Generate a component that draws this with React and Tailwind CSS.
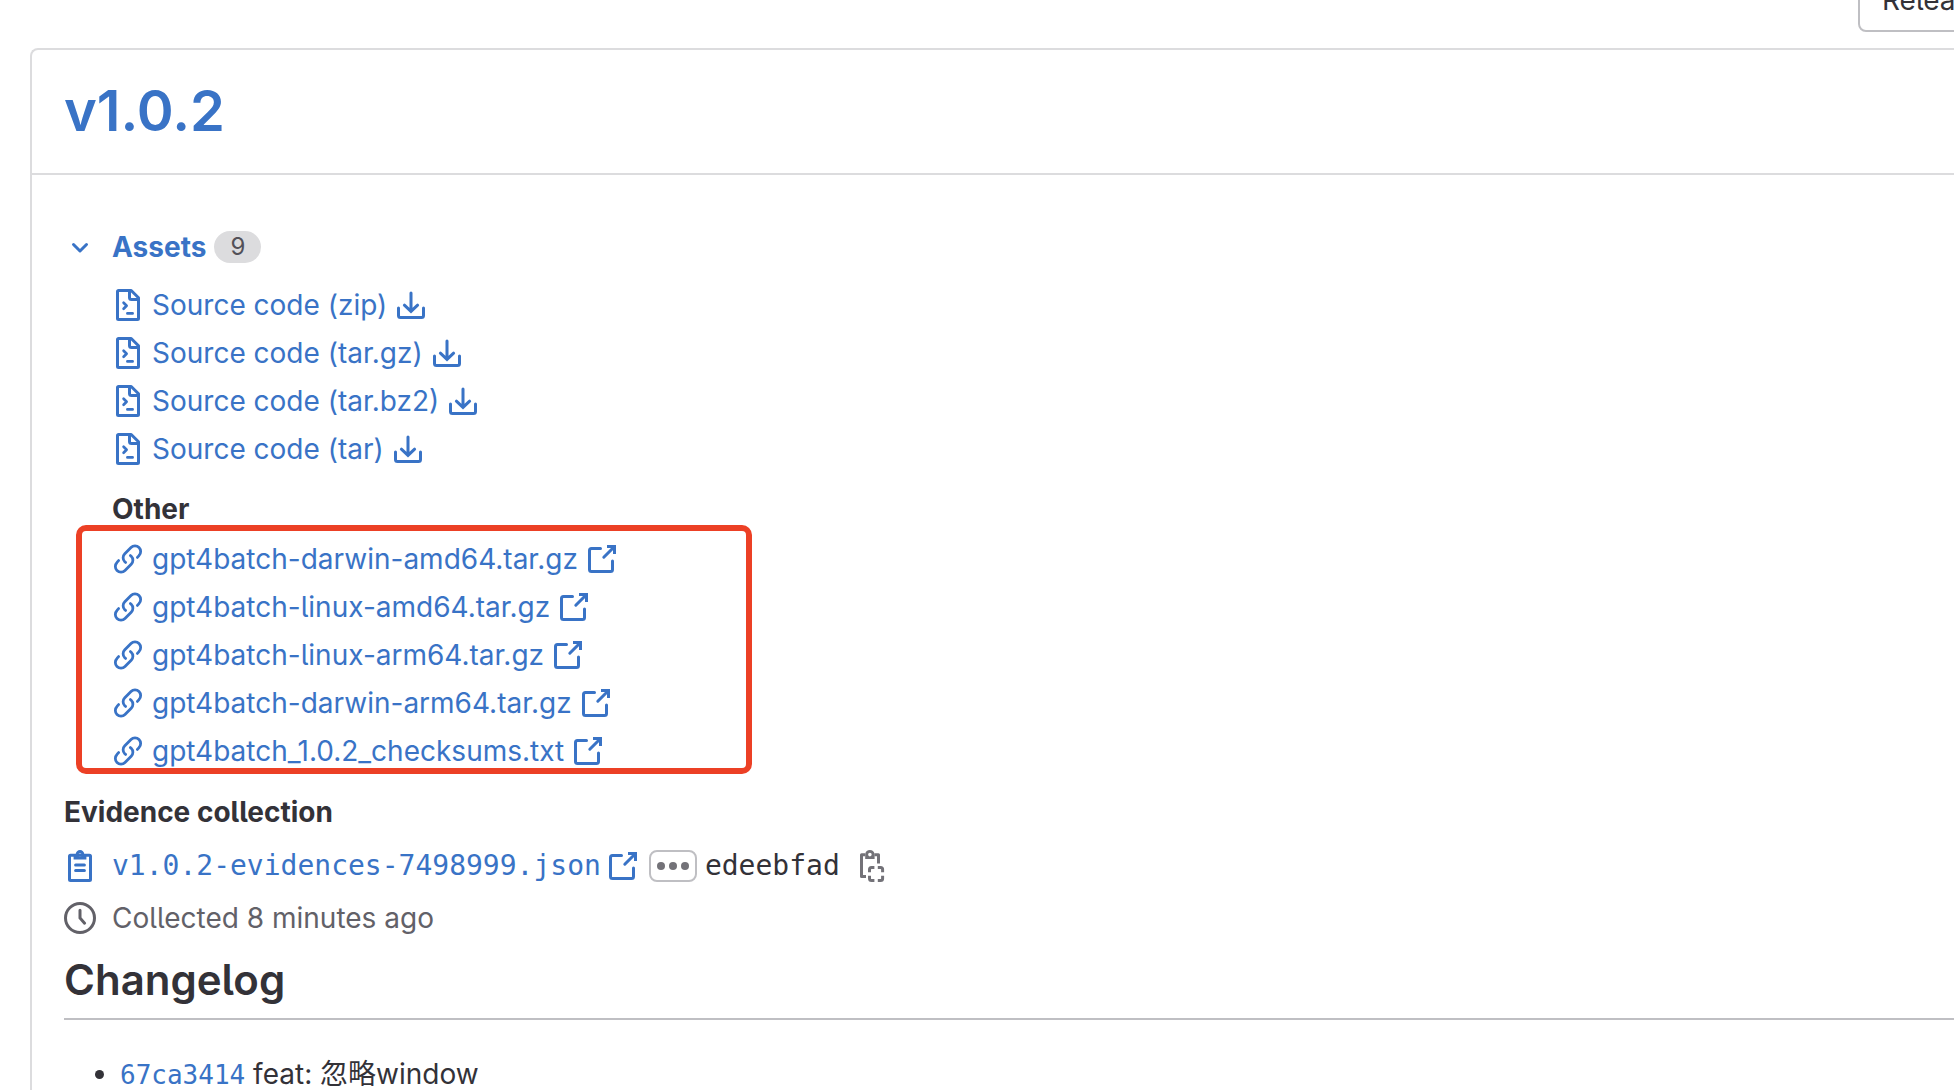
import { useState } from "react";

const sources = [
  "Source code (zip)",
  "Source code (tar.gz)",
  "Source code (tar.bz2)",
  "Source code (tar)",
];

const others = [
  "gpt4batch-darwin-amd64.tar.gz",
  "gpt4batch-linux-amd64.tar.gz",
  "gpt4batch-linux-arm64.tar.gz",
  "gpt4batch-darwin-arm64.tar.gz",
  "gpt4batch_1.0.2_checksums.txt",
];

function Icon({ children, className = "" }) {
  return (
    <svg
      viewBox="0 0 16 16"
      className={`size-8 shrink-0 ${className}`}
      fill="none"
      stroke="currentColor"
      strokeWidth="1.5"
      aria-hidden="true"
    >
      {children}
    </svg>
  );
}

function ChevronIcon({ className }) {
  return (
    <Icon className={className}>
      <path
        d="M4.75 6.75 8 10l3.25-3.25"
        strokeLinecap="round"
        strokeLinejoin="round"
      />
    </Icon>
  );
}

function DocCodeIcon() {
  return (
    <Icon>
      <path
        d="M9.6.75H3.25a.5.5 0 0 0-.5.5v13.5a.5.5 0 0 0 .5.5h9.5a.5.5 0 0 0 .5-.5V4.4L9.6.75Z"
        strokeLinejoin="round"
      />
      <path d="M8.75 1v3.25a1 1 0 0 0 1 1H13" />
      <path
        d="m5.8 6.9 1.5 1.5-1.5 1.5M7.7 12.2h2.6"
        strokeWidth="1.35"
        strokeLinecap="round"
        strokeLinejoin="round"
      />
    </Icon>
  );
}

function DownloadIcon() {
  return (
    <Icon>
      <path
        d="M8 2v9M4.7 8.1 8 11.2l3.3-3.1M1.75 9.5v3.75a1 1 0 0 0 1 1h10.5a1 1 0 0 0 1-1V9.5"
        strokeLinecap="round"
      />
    </Icon>
  );
}

function LinkIcon() {
  return (
    <Icon>
      <path
        d="m3.3 8.8-.8.9a2.8 2.8 0 0 0 4 4l3.1-3.1a2.8 2.8 0 0 0 0-4l-.4-.3M12.7 7.2l.8-.9a2.8 2.8 0 0 0-4-4L6.4 5.4a2.8 2.8 0 0 0 0 4l.4.3"
        strokeWidth="1.4"
        strokeLinecap="round"
      />
    </Icon>
  );
}

function ExternalIcon() {
  return (
    <Icon>
      <path
        d="M7.25 2.75h-4.5a1 1 0 0 0-1 1v9.5a1 1 0 0 0 1 1h9.5a1 1 0 0 0 1-1V9"
        strokeLinecap="round"
      />
      <path d="m8.9 7.1 5-5" strokeLinecap="round" />
      <path d="M10.5 1.75h3.75v3.75" />
    </Icon>
  );
}

function ClipboardIcon() {
  return (
    <Icon>
      <path
        d="M3.25 2.6h9.5a.5.5 0 0 1 .5.5v11.65a.5.5 0 0 1-.5.5h-9.5a.5.5 0 0 1-.5-.5V3.1a.5.5 0 0 1 .5-.5Z"
        strokeLinejoin="round"
      />
      <path
        d="M4.8 2.2h1C6 .9 6.8 0 8 0s2 .9 2.2 2.2h1v2.6H4.8V2.2ZM8 1.6a.85.85 0 1 0 0 1.7.85.85 0 0 0 0-1.7Z"
        fill="currentColor"
        fillRule="evenodd"
        stroke="none"
      />
      <path d="M5.8 7.5h4.4M5.8 10.2h4.4" strokeLinecap="round" />
    </Icon>
  );
}

function ClockIcon() {
  return (
    <Icon>
      <circle cx="8" cy="8" r="7.25" />
      <path d="M8 4.1V8l2.3 2.6" strokeLinecap="round" />
    </Icon>
  );
}

function CopyIcon() {
  return (
    <Icon>
      <path d="M4.6 2.4H2.75v10.9H5M9.2 2.4h2.05V6.8" strokeLinejoin="round" />
      <path
        d="M4.6 2C4.8.7 5.7 0 6.95 0S9.05.7 9.3 2v2.5H4.6V2ZM6.95 1.4a.9.9 0 1 0 0 1.8.9.9 0 0 0 0-1.8Z"
        fill="currentColor"
        fillRule="evenodd"
        stroke="none"
      />
      <path d="M6.75 11.1V9.75a1 1 0 0 1 1-1H9.2M10.9 8.75h1.4a1 1 0 0 1 1 1v1.35M13.3 12.9v1.35a1 1 0 0 1-1 1h-1.4M9.2 15.25H7.75a1 1 0 0 1-1-1V12.9" />
    </Icon>
  );
}

function AssetLink({ name, icon, action }) {
  return (
    <li className="flex h-12 items-center">
      <a href="#" className="flex items-center gap-2 text-[#3973c6]">
        {icon}
        {name}
        {action}
      </a>
    </li>
  );
}

export default function App() {
  const [open, setOpen] = useState(true);

  return (
    <div className="h-screen overflow-hidden bg-white pl-[30px] font-['Inter','Noto_Sans_CJK_SC',sans-serif] text-[28px] leading-[48px] text-[#333238] [font-feature-settings:'cv05']">
      <div className="flex h-8 items-end justify-end">
        <div className="flex w-24 shrink-0">
          <button
            type="button"
            className="h-16 shrink-0 rounded-lg border-2 border-[#bfbfc3] px-[22px] leading-[60px] whitespace-nowrap"
          >
            Released date
          </button>
        </div>
      </div>

      <main className="mt-4 rounded-tl-lg border-t-2 border-l-2 border-[#dcdcde]">
        <header className="border-b-2 border-[#dcdcde] px-8 pt-[29px] pb-[30px]">
          <h1 className="text-[56px] leading-[64px] font-semibold">
            <a href="#" className="text-[#3973c6]">
              v1.0.2
            </a>
          </h1>
        </header>

        <div className="pt-12 pl-8">
          <button
            type="button"
            aria-expanded={open}
            onClick={() => setOpen(!open)}
            className="flex h-12 items-center font-bold text-[#3973c6]"
          >
            <ChevronIcon className={open ? "" : "-rotate-90"} />
            <span className="ml-4">Assets</span>
            <span className="ml-2 rounded-full bg-[#dcdcde] px-4 text-2xl leading-8 font-normal text-[#535158]">
              9
            </span>
          </button>

          {open && (
            <div className="mt-2.5 pl-12">
              <ul>
                {sources.map((name) => (
                  <AssetLink
                    key={name}
                    name={name}
                    icon={<DocCodeIcon />}
                    action={<DownloadIcon />}
                  />
                ))}
              </ul>
              <h2 className="mt-3 mb-0.5 font-bold">Other</h2>
              <div className="relative">
                <ul>
                  {others.map((name) => (
                    <AssetLink
                      key={name}
                      name={name}
                      icon={<LinkIcon />}
                      action={<ExternalIcon />}
                    />
                  ))}
                </ul>
                <div className="pointer-events-none absolute -top-2.5 bottom-px -left-9 w-[676px] rounded-[10px] border-6 border-[#ec4025]"></div>
              </div>
            </div>
          )}

          <h2 className="mt-[13px] font-bold">Evidence collection</h2>
          <div className="mt-1.5 flex h-12 items-center font-['DejaVu_Sans_Mono',monospace]">
            <a href="#" className="flex items-center text-[#3973c6]">
              <ClipboardIcon />
              <span className="mr-1.5 ml-4">v1.0.2-evidences-7498999.json</span>
              <ExternalIcon />
            </a>
            <button
              type="button"
              aria-label="Expand"
              className="mr-2 ml-2.5 flex h-8 w-12 items-center justify-center rounded-lg border-2 border-[#bfbfc3] text-[#737278]"
            >
              <svg viewBox="0 0 32 8" className="h-2 w-8" fill="currentColor">
                <circle cx="4" cy="4" r="4" />
                <circle cx="16" cy="4" r="4" />
                <circle cx="28" cy="4" r="4" />
              </svg>
            </button>
            <span>edeebfad</span>
            <button type="button" aria-label="Copy" className="ml-4 text-[#737278]">
              <CopyIcon />
            </button>
          </div>
          <div className="mt-1 flex h-12 items-center gap-4 text-[#626168]">
            <ClockIcon />
            <span>Collected 8 minutes ago</span>
          </div>

          <h2 className="mt-2.5 border-b-2 border-[#bfbfc3] pb-2.5 text-[42px] leading-[56px] font-semibold">
            Changelog
          </h2>
          <ul className="mt-[30px] list-disc pl-14">
            <li>
              <a
                href="#"
                className="font-['DejaVu_Sans_Mono',monospace] text-[26px] text-[#3973c6]"
              >
                67ca3414
              </a>{" "}
              feat: 忽略window
            </li>
          </ul>
        </div>
      </main>
    </div>
  );
}
